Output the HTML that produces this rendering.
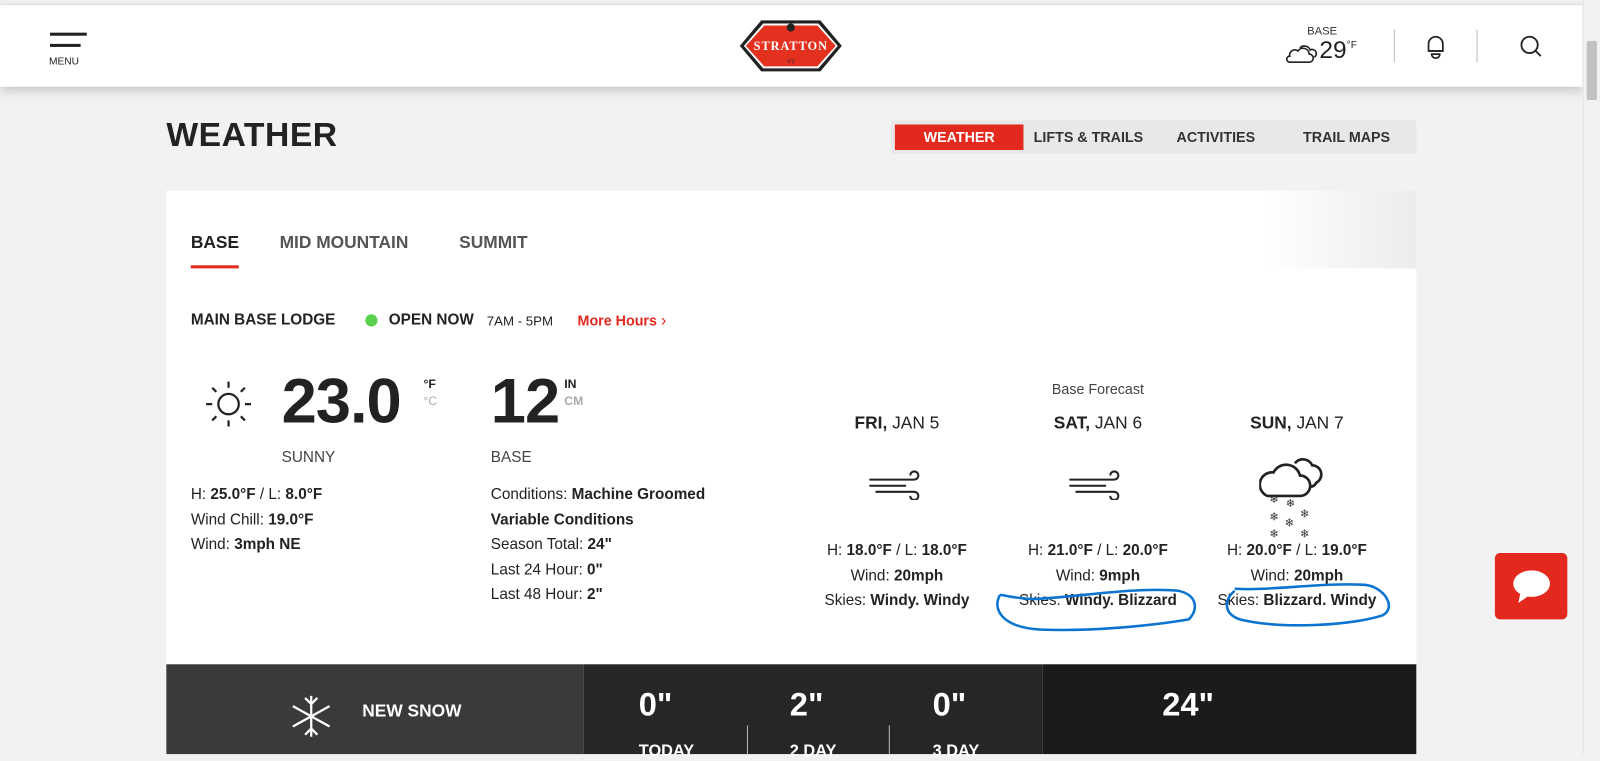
<!DOCTYPE html>
<html><head><meta charset="utf-8"><style>
*{margin:0;padding:0;box-sizing:border-box}
body{width:1600px;height:739px;overflow:hidden;background:#f2f2f2;font-family:"Liberation Sans",Arial,sans-serif;color:#222;position:relative}
#w{position:absolute;left:0;top:0;width:1568px;height:724px;transform:scale(1.0204);transform-origin:0 0}
.a{position:absolute;white-space:nowrap}
b{font-weight:700}
.hdr{position:absolute;left:0;top:4px;width:1551px;height:81px;background:#fff;box-shadow:0 4px 10px rgba(0,0,0,.18);border-top:1px solid #ddd}
.sb{position:absolute;left:1551px;top:0;width:17px;height:739px;background:#f1f1f1;border-left:1px solid #e4e4e4}
.sb i{position:absolute;left:3px;top:40px;width:10px;height:58px;background:#c1c1c1;border-radius:2px}
.card{position:absolute;left:163px;top:187px;width:1225px;height:552px;background:#fff}
.tabs{position:absolute;left:163px;top:187px;width:1225px;height:76px;background:linear-gradient(90deg,#fff 88%,#ececec)}
.c{text-align:center}
.f{font-size:15px;line-height:24.5px}
</style></head><body><div id="w">
<div class="hdr"></div>
<div class="sb"><i></i></div>
<div class="a" style="left:49px;top:32px;width:36px;height:3px;background:#222"></div>
<div class="a" style="left:49px;top:43px;width:30px;height:3px;background:#222"></div>
<div class="a" style="left:48px;top:55px;font-size:10px">MENU</div>
<svg class="a" style="left:724px;top:16px" width="102" height="58" viewBox="0 0 102 58">
<polygon points="22,4 80,4 101,29 80,54 22,54 1,29" fill="#222"/>
<polygon points="24,7 78,7 97,29 78,51 24,51 5,29" fill="#fff"/>
<polygon points="25,9 77,9 95,29 77,49 25,49 7,29" fill="#e3301f"/>
<circle cx="51" cy="11" r="4" fill="#222"/>
<text x="51" y="33" text-anchor="middle" font-family="Liberation Serif,serif" font-weight="700" font-size="12" fill="#fff" letter-spacing="1">STRATTON</text>
<text x="51" y="46" text-anchor="middle" font-family="Liberation Serif,serif" font-size="6" fill="#222">VT</text>
</svg>
<div class="a" style="left:1281px;top:25px;font-size:11px;color:#333">BASE</div>
<svg class="a" style="left:1259px;top:40px" width="34" height="24" viewBox="0 0 34 24" fill="none" stroke="#222" stroke-width="1.6"><path d="M5 21h19a4 4 0 0 0 0-8 6 6 0 0 0-11-3 5 5 0 0 0-8 5 3 3 0 0 0 0 6z"/><path d="M15 7a6 6 0 0 1 10 2 4 4 0 0 1 4 7"/></svg>
<div class="a" style="left:1293px;top:36px;font-size:24px;color:#222">29<sup style="font-size:10px;vertical-align:10px">°F</sup></div>
<div class="a" style="left:1366px;top:29px;width:1px;height:32px;background:#bbb"></div>
<svg class="a" style="left:1397px;top:33px" width="20" height="26" viewBox="0 0 20 26" fill="none" stroke="#222" stroke-width="1.7"><path d="M3 17V10a7 7 0 0 1 14 0v7z"/><path d="M3 17h14"/><path d="M6 20h8a4 4 0 0 1-8 0z"/></svg>
<div class="a" style="left:1447px;top:29px;width:1px;height:32px;background:#bbb"></div>
<svg class="a" style="left:1489px;top:34px" width="24" height="24" viewBox="0 0 24 24" fill="none" stroke="#222" stroke-width="1.8"><circle cx="10" cy="10" r="8"/><path d="M16 16l5 5"/></svg>
<div class="a" style="left:163px;top:113px;font-size:33px;font-weight:700;letter-spacing:.5px">WEATHER</div>
<div class="a" style="left:873px;top:118px;width:515px;height:33px;background:#e8e8e8"></div>
<div class="a c" style="left:877px;top:122px;width:126px;height:25px;background:#e3281d;color:#fff;font-weight:700;font-size:14px;line-height:25px">WEATHER</div>
<div class="a" style="left:1013px;top:126px;font-size:14px;font-weight:700;color:#333">LIFTS &amp; TRAILS</div>
<div class="a" style="left:1153px;top:126px;font-size:14px;font-weight:700;color:#333">ACTIVITIES</div>
<div class="a" style="left:1277px;top:126px;font-size:14px;font-weight:700;color:#333">TRAIL MAPS</div>
<div class="card"></div>
<div class="tabs"></div>
<div class="a" style="left:187px;top:228px;font-size:17px;font-weight:700">BASE</div>
<div class="a" style="left:187px;top:260px;width:47px;height:3px;background:#e3281d"></div>
<div class="a" style="left:274px;top:228px;font-size:17px;font-weight:700;color:#555">MID MOUNTAIN</div>
<div class="a" style="left:450px;top:228px;font-size:17px;font-weight:700;color:#555">SUMMIT</div>
<div class="a" style="left:187px;top:305px;font-size:15px;font-weight:700">MAIN BASE LODGE</div>
<div class="a" style="left:358px;top:308px;width:12px;height:12px;border-radius:50%;background:#5ad14c"></div>
<div class="a" style="left:381px;top:305px;font-size:15px;font-weight:700">OPEN NOW</div>
<div class="a" style="left:477px;top:307px;font-size:13px">7AM - 5PM</div>
<div class="a" style="left:566px;top:306px;font-size:14px;font-weight:700;color:#e3281d">More Hours <span style="font-weight:400;font-size:16px">&#x203A;</span></div>
<svg class="a" style="left:200px;top:372px" width="48" height="48" viewBox="0 0 48 48" fill="none" stroke="#222" stroke-width="2.2"><circle cx="24" cy="24" r="10"/><path d="M24 2v6M24 40v6M2 24h6M40 24h6M8 8l4 4M36 36l4 4M8 40l4-4M36 12l4-4"/></svg>
<div class="a" style="left:276px;top:358px;font-size:62px;font-weight:700;letter-spacing:-1px">23.0</div>
<div class="a" style="left:415px;top:369px;font-size:12px;font-weight:700">°F</div>
<div class="a" style="left:415px;top:386px;font-size:12px;color:#aaa">°C</div>
<div class="a" style="left:276px;top:440px;font-size:15px;color:#444">SUNNY</div>
<div class="a" style="left:481px;top:358px;font-size:62px;font-weight:700;letter-spacing:-1px">12</div>
<div class="a" style="left:553px;top:369px;font-size:12px;font-weight:700">IN</div>
<div class="a" style="left:553px;top:386px;font-size:12px;color:#aaa;font-weight:700">CM</div>
<div class="a" style="left:481px;top:440px;font-size:15px;color:#444">BASE</div>
<div class="a f" style="left:187px;top:473px">H: <b>25.0°F</b> / L: <b>8.0°F</b><br>Wind Chill: <b>19.0°F</b><br>Wind: <b>3mph NE</b></div>
<div class="a f" style="left:481px;top:473px">Conditions: <b>Machine Groomed</b><br><b>Variable Conditions</b><br>Season Total: <b>24"</b><br>Last 24 Hour: <b>0"</b><br>Last 48 Hour: <b>2"</b></div>
<div class="a c" style="left:976px;top:373px;width:200px;font-size:14px;color:#444">Base Forecast</div>
<div class="a c" style="left:779px;top:405px;width:200px;font-size:17px"><b>FRI,</b> JAN 5</div>
<div class="a c" style="left:976px;top:405px;width:200px;font-size:17px"><b>SAT,</b> JAN 6</div>
<div class="a c" style="left:1171px;top:405px;width:200px;font-size:17px"><b>SUN,</b> JAN 7</div>
<svg class="a" style="left:850px;top:460px" width="56" height="30" viewBox="0 0 56 30" fill="none" stroke="#222" stroke-width="2"><path d="M2 10h44a4 4 0 1 0-4-4"/><path d="M2 16h36"/><path d="M8 22h38a4 4 0 1 1-4 4"/></svg>
<svg class="a" style="left:1046px;top:460px" width="56" height="30" viewBox="0 0 56 30" fill="none" stroke="#222" stroke-width="2"><path d="M2 10h44a4 4 0 1 0-4-4"/><path d="M2 16h36"/><path d="M8 22h38a4 4 0 1 1-4 4"/></svg>
<svg class="a" style="left:1234px;top:440px" width="74" height="88" viewBox="0 0 74 88" fill="none" stroke="#222" stroke-width="2.6"><path d="M8 46h32a10 10 0 0 0 0-20 14 14 0 0 0-26-3 12 12 0 0 0-6 23z"/><path d="M35 14a10 10 0 0 1 17 2 9 9 0 0 1 4 17 7 7 0 0 1-6 4"/>
<g font-size="11" fill="#333" stroke="none" font-family="DejaVu Sans"><text x="10" y="53">❄</text><text x="26" y="57">❄</text><text x="10" y="70">❄</text><text x="25" y="76">❄</text><text x="40" y="67">❄</text><text x="10" y="87">❄</text><text x="40" y="87">❄</text></g></svg>
<div class="a c f" style="left:779px;top:528px;width:200px">H: <b>18.0°F</b> / L: <b>18.0°F</b><br>Wind: <b>20mph</b><br>Skies: <b>Windy. Windy</b></div>
<div class="a c f" style="left:976px;top:528px;width:200px">H: <b>21.0°F</b> / L: <b>20.0°F</b><br>Wind: <b>9mph</b><br>Skies: <b>Windy. Blizzard</b></div>
<div class="a c f" style="left:1171px;top:528px;width:200px">H: <b>20.0°F</b> / L: <b>19.0°F</b><br>Wind: <b>20mph</b><br>Skies: <b>Blizzard. Windy</b></div>
<svg class="a" style="left:970px;top:565px" width="400" height="60" viewBox="0 0 400 60" fill="none" stroke="#0a74d0" stroke-width="2.5"><path d="M10 18c-8 14 2 32 40 34 50 2 110-4 145-10 10-10 8-24-10-28-40-4-100 6-140 8-20 0-30-4-35-4"/><path d="M240 14c-10 8-12 22 5 28 40 10 110 6 140-4 15-8 0-30-20-30-40-2-90 6-125 4"/></svg>
<div class="a" style="left:1465px;top:542px;width:71px;height:65px;background:#e3281d;border-radius:5px"></div>
<svg class="a" style="left:1482px;top:557px" width="38" height="36" viewBox="0 0 38 36"><ellipse cx="19" cy="15" rx="18" ry="13" fill="#fff"/><path d="M8 24l-2 10 10-7z" fill="#fff"/></svg>
<div class="a" style="left:163px;top:651px;width:409px;height:88px;background:#3a3a3a"></div>
<div class="a" style="left:572px;top:651px;width:450px;height:88px;background:#262626"></div>
<div class="a" style="left:1022px;top:651px;width:366px;height:88px;background:#1b1b1b"></div>
<svg class="a" style="left:282px;top:680px" width="46" height="44" viewBox="0 0 46 44" fill="none" stroke="#fff" stroke-width="2.2"><path d="M23 2v40M5 12l36 20M5 32l36-20M17 4l6 6 6-6M17 40l6-6 6 6"/></svg>
<div class="a" style="left:355px;top:687px;font-size:17px;font-weight:700;color:#fff">NEW SNOW</div>
<div class="a" style="left:626px;top:672px;font-size:32px;font-weight:700;color:#fff">0"</div>
<div class="a" style="left:774px;top:672px;font-size:32px;font-weight:700;color:#fff">2"</div>
<div class="a" style="left:914px;top:672px;font-size:32px;font-weight:700;color:#fff">0"</div>
<div class="a" style="left:732px;top:711px;width:1px;height:28px;background:#bbb"></div>
<div class="a" style="left:871px;top:711px;width:1px;height:28px;background:#bbb"></div>
<div class="a" style="left:1139px;top:672px;font-size:32px;font-weight:700;color:#fff">24"</div>
<div class="a" style="left:626px;top:728px;font-size:16px;font-weight:700;color:#fff">TODAY</div>
<div class="a" style="left:774px;top:728px;font-size:16px;font-weight:700;color:#fff">2 DAY</div>
<div class="a" style="left:914px;top:728px;font-size:16px;font-weight:700;color:#fff">3 DAY</div>
</div></body></html>
